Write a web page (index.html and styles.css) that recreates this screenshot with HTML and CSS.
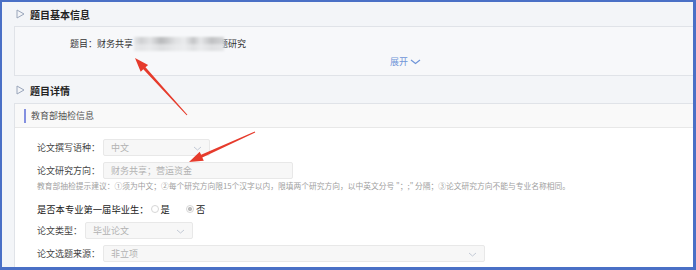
FILE: index.html
```html
<!DOCTYPE html>
<html lang="zh-CN">
<head>
    <meta charset="UTF-8">
    <title>题目信息</title>
    <link rel="stylesheet" href="styles.css">
</head>
<body>
    <div class="frame">
        <div class="sec-head">
            <svg class="tri" width="9" height="10" viewBox="0 0 9 10"><polygon points="1,1 8,5 1,9" fill="none" stroke="#9aa6bb" stroke-width="1"/></svg>
            <span>题目基本信息</span>
        </div>
        <div class="card basic">
            <div class="title-line">
                题目：财务共享<span class="masked"></span><span class="cut">题</span>研究
            </div>
            <div class="expand">展开
                <svg width="11" height="6" viewBox="0 0 11 6"><polyline points="1,1 5.5,4.5 10,1" fill="none" stroke="#6f95d8" stroke-width="1.2"/></svg>
            </div>
        </div>

        <div class="sec-head detail-head">
            <svg class="tri" width="9" height="10" viewBox="0 0 9 10"><polygon points="1,1 8,5 1,9" fill="none" stroke="#9aa6bb" stroke-width="1"/></svg>
            <span>题目详情</span>
        </div>
        <div class="card detail">
            <div class="sub-head">教育部抽检信息</div>
            <div class="form">
                <div class="row">
                    <label>论文撰写语种：</label>
                    <div class="field select w-lang">中文<svg class="chev" width="9" height="5" viewBox="0 0 9 5"><polyline points="1,1 4.5,4 8,1" fill="none" stroke="#c3cad6" stroke-width="1"/></svg></div>
                </div>
                <div class="row">
                    <label>论文研究方向：</label>
                    <div class="field w-dir">财务共享；营运资金</div>
                </div>
                <div class="hint">教育部抽检提示建议：①须为中文；②每个研究方向限15个汉字以内，限填两个研究方向，以中英文分号 "；;" 分隔；③论文研究方向不能与专业名称相同。</div>
                <div class="row radio-row">
                    <label>是否本专业第一届毕业生：</label>
                    <span class="radio"></span><span class="opt">是</span>
                    <span class="radio checked"></span><span class="opt">否</span>
                </div>
                <div class="row">
                    <label>论文类型：</label>
                    <div class="field select w-type">毕业论文<svg class="chev" width="9" height="5" viewBox="0 0 9 5"><polyline points="1,1 4.5,4 8,1" fill="none" stroke="#c3cad6" stroke-width="1"/></svg></div>
                </div>
                <div class="row">
                    <label>论文选题来源：</label>
                    <div class="field select w-src">非立项<svg class="chev" width="9" height="5" viewBox="0 0 9 5"><polyline points="1,1 4.5,4 8,1" fill="none" stroke="#c3cad6" stroke-width="1"/></svg></div>
                </div>
            </div>
        </div>

        <!-- annotation arrows drawn over the screenshot -->
        <svg class="arrows" width="696" height="270" viewBox="0 0 696 270">
            <polygon points="135,58 148.1,64.9 145.5,67.3 187.4,114.7 186.6,115.3 143.3,69.3 140.7,71.7" fill="#e63b2c"/>
            <polygon points="189,162 199.7,151.7 201.1,154.8 254.8,131.5 255.2,132.5 202.3,157.6 203.8,160.7" fill="#e63b2c"/>
        </svg>
    </div>
</body>
</html>
```

FILE: styles.css
```css
body {
    margin: 0;
    font-family: "Noto Sans CJK SC", "Noto Sans", sans-serif;
}
.frame {
    position: relative;
    width: 696px;
    height: 270px;
    box-sizing: border-box;
    border-style: solid;
    border-color: #4a70c6;
    border-width: 2px 3px 3px 2px;
    background: #f3f5f8;
    overflow: hidden;
}
.sec-head {
    height: 24px;
    display: flex;
    align-items: center;
    padding-left: 14px;
    font-size: 10px;
    font-weight: bold;
    color: #222;
}
.sec-head .tri {
    margin-right: 5px;
}
.detail-head {
    height: 27px;
    padding-top: 1px;
    box-sizing: border-box;
}
.card {
    margin-left: 12px;
    border: 1px solid #e0e3e8;
    border-right: none;
}
.basic {
    height: 50px;
    box-sizing: border-box;
    background: #f7f8fa;
    position: relative;
}
.title-line {
    padding: 10px 0 0 55px;
    font-size: 9px;
    line-height: 14px;
    color: #333;
    display: flex;
    align-items: center;
}
.masked {
    display: inline-block;
    width: 90px;
    height: 14px;
    margin-left: 1px;
    position: relative;
    z-index: 1;
    background:
        linear-gradient(180deg, rgba(255,255,255,0) 0 45%, rgba(236,237,239,0.7) 55% 100%),
        linear-gradient(90deg, #e6e7e9 0, #cfd0d2 8%, #e2e3e5 18%, #b9babc 30%, #c6c7c9 36%, #e0e1e3 46%, #eaebed 56%, #c4c5c7 66%, #e6e7e9 74%, #c0c1c3 86%, #d4d5d7 100%);
    filter: blur(1px);
}
.cut {
    margin-left: -5px;
}
.expand {
    position: absolute;
    left: 375px;
    top: 29px;
    font-size: 9px;
    line-height: 12px;
    color: #6f95d8;
    display: flex;
    align-items: center;
    gap: 2px;
}
.detail {
    background: #fff;
    height: 200px;
    border-bottom: none;
}
.sub-head {
    height: 24px;
    box-sizing: border-box;
    border-bottom: 1px solid #e8e8e8;
    background: #f9f9f9;
    display: flex;
    align-items: center;
    padding-left: 16px;
    font-size: 9px;
    color: #555;
    position: relative;
}
.sub-head::before {
    content: "";
    position: absolute;
    left: 9px;
    top: 5px;
    width: 2px;
    height: 14px;
    background: #8490e0;
}
.form {
    padding: 11px 0 0 22px;
}
.row {
    display: flex;
    align-items: center;
    height: 17px;
    margin-bottom: 6px;
    font-size: 9px;
    color: #444;
}
.row label {
    margin-right: 3px;
}
.field {
    height: 17px;
    box-sizing: border-box;
    border: 1px solid #e8e8e8;
    border-radius: 2px;
    background: #f7f7f7;
    color: #b2b2b2;
    padding-left: 7px;
    display: flex;
    align-items: center;
    position: relative;
}
.select .chev {
    position: absolute;
    right: 7px;
    top: 6px;
}
.w-lang { width: 107px; }
.w-dir { width: 190px; }
.w-type { width: 108px; }
.w-src { width: 382px; }
.hint {
    font-size: 7.75px;
    line-height: 12px;
    color: #a0a0a0;
    margin: -5px 0 8px;
    white-space: nowrap;
}
.radio-row {
    font-size: 9.3px;
    color: #222;
    margin-bottom: 5px;
}
.radio-row label {
    margin-right: 2px;
}
.radio {
    width: 6px;
    height: 6px;
    border: 1px solid #d6d6d6;
    border-radius: 50%;
    margin-right: 2px;
}
.radio.checked {
    background: radial-gradient(circle, #bbb 0 2px, #fff 2.2px);
}
.opt {
    margin-right: 16px;
}
.arrows {
    position: absolute;
    left: -2px;
    top: -2px;
    pointer-events: none;
}
```
